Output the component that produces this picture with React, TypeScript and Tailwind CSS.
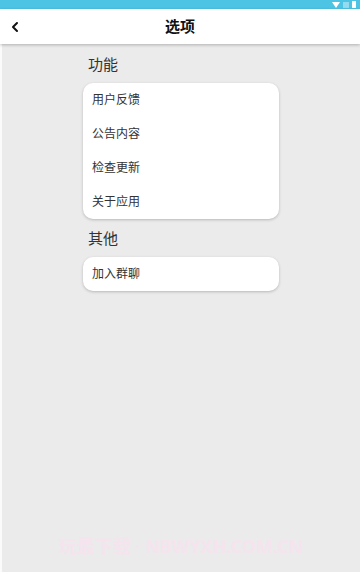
import { ChevronLeft } from "lucide-react";

const font = { fontFamily: '"Noto Sans", "Noto Sans CJK SC", sans-serif' };

const features = ["用户反馈", "公告内容", "检查更新", "关于应用"];
const others = ["加入群聊"];

const Section = ({ title, items }: { title: string; items: string[] }) => (
  <div className="flex flex-col">
    <div className="h-5 pl-[5px] text-[15px] leading-5 text-[#333]">{title}</div>
    <div className="mt-[9px] rounded-[10px] bg-white shadow-[0_1px_3px_rgba(0,0,0,0.22)]">
      {items.map((item) => (
        <div key={item} className="flex h-[34px] items-center pl-[9px] text-[12px] text-[#333]">
          {item}
        </div>
      ))}
    </div>
  </div>
);

export default function App() {
  return (
    <div className="flex h-[572px] w-[360px] flex-col overflow-hidden bg-[#ebebeb]" style={font}>
      <div className="flex h-[9px] justify-end bg-[#4ec4e4] pr-1">
        <div className="flex items-center gap-[3px] text-white">
          <svg width="8" height="6" viewBox="0 0 8 6"><path d="M0 0h8L4 6z" fill="white" /></svg>
          <div className="h-[6px] w-[6px] bg-white/40" />
          <div className="h-[7px] w-[4px] bg-white" />
        </div>
      </div>
      <div className="relative z-10 flex h-[35px] items-center bg-white shadow-[0_1px_3px_rgba(0,0,0,0.25)]">
        <ChevronLeft size={16} strokeWidth={3} className="absolute left-[7px] text-[#111]" />
        <div className="flex-1 text-center text-[15px] font-bold text-[#111]">选项</div>
      </div>
      <div className="flex flex-1 border-l-2 border-white/80">
        <div className="mx-auto flex w-[196px] flex-col pt-[10px]">
          <Section title="功能" items={features} />
          <div className="mt-[9px]">
            <Section title="其他" items={others} />
          </div>
          <div className="flex-1" />
          <div className="mb-[12px] -mx-16 text-center text-[18px] font-bold whitespace-nowrap text-[#f5e4ee]">
            玩最下载 · NBWYXH.COM.CN
          </div>
        </div>
      </div>
    </div>
  );
}
